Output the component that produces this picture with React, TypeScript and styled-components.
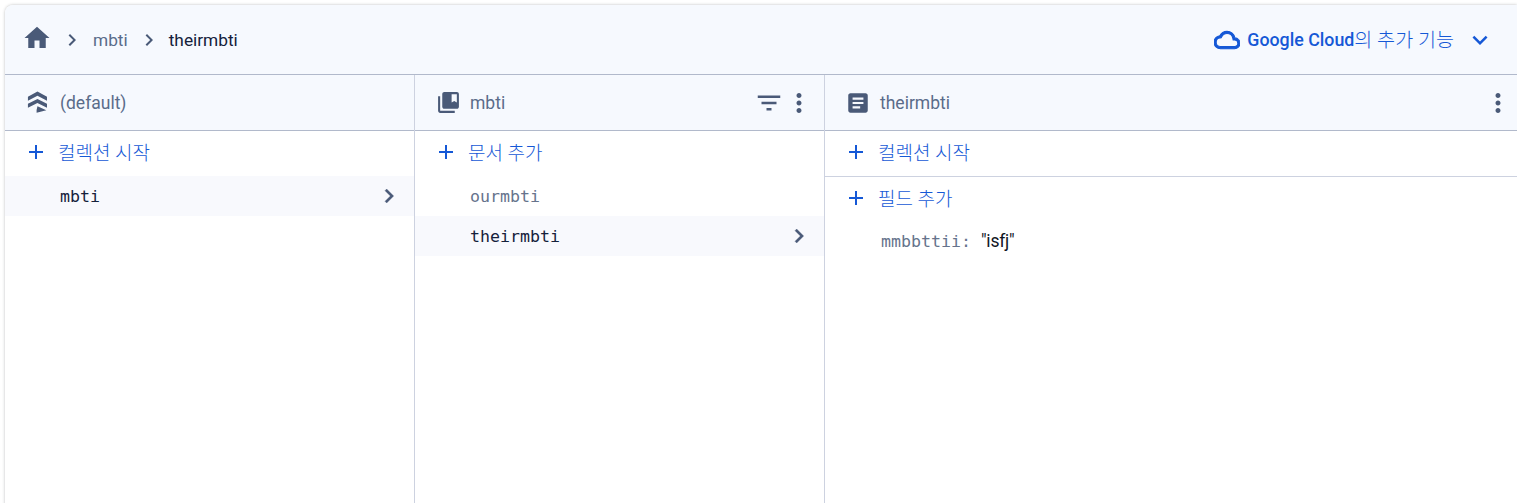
import React from 'react';
import styled, { createGlobalStyle } from 'styled-components';

const Global = createGlobalStyle`
  html, body { margin: 0; padding: 0; background: #fff; overflow: hidden; }
  body { font-family: Roboto, "Noto Sans CJK KR", sans-serif; }
`;

const Page = styled.div`
  height: 503px;
  padding: 5px 0 0 5px;
  box-sizing: border-box;
  overflow: hidden;
`;

const Card = styled.div`
  height: 520px;
  border-radius: 8px 0 0 0;
  box-shadow: 0 0 3px rgba(60, 64, 67, 0.35);
  display: flex;
  flex-direction: column;
  background: #fff;
  overflow: hidden;
`;

const TopBar = styled.header`
  height: 69px;
  flex: none;
  display: flex;
  align-items: center;
  justify-content: space-between;
  background: #f6f9fe;
  border-bottom: 1px solid #b1b9cb;
  padding: 0 22px 0 17px;
`;

const Crumbs = styled.nav`
  display: flex;
  align-items: center;
  font-size: 17.3px;
  color: #5a6c8a;
`;

const Svg = styled.svg<{ $size: number; $color?: string; $weight?: number }>`
  width: ${p => p.$size}px;
  height: ${p => p.$size}px;
  flex: none;
  display: block;
  fill: ${p => p.$color ?? '#4a5a78'};
  stroke: ${p => (p.$weight ? p.$color ?? '#4a5a78' : 'none')};
  stroke-width: ${p => p.$weight ?? 0};
`;

const HomeLink = styled.span`
  display: flex;
  margin: -4px 8px 0 0;
`;

const CrumbText = styled.span<{ $current?: boolean; $gap: number }>`
  margin: 0 ${p => p.$gap}px;
  color: ${p => (p.$current ? '#15213b' : '#5a6c8a')};
`;

const Extensions = styled.div`
  display: flex;
  align-items: center;
  color: #1558d6;
  font-size: 17.8px;
`;

const CloudIcon = styled.span`
  display: flex;
  margin-right: 7px;
`;

const ExtLabel = styled.span`
  font-weight: 500;
`;

const ExtSuffix = styled.span`
  font-weight: 300;
  font-size: 19.6px;
  margin-top: -2px;
`;

const ExpandIcon = styled.span`
  display: flex;
  margin-left: 11px;
`;

const Columns = styled.div`
  flex: 1;
  display: grid;
  grid-template-columns: 410px 410px 1fr;
`;

const Column = styled.section<{ $last?: boolean }>`
  border-right: ${p => (p.$last ? 'none' : '1px solid #cdd2e0')};
  display: flex;
  flex-direction: column;
`;

const ColHeader = styled.div<{ $endPad?: number }>`
  height: 55px;
  flex: none;
  display: flex;
  align-items: center;
  background: #f6f9fe;
  border-bottom: 1px solid #b1b9cb;
  padding: 0 ${p => p.$endPad ?? 0}px 0 20px;
  font-size: 17.5px;
  color: #5a6c8a;
`;

const ColIcon = styled.span`
  width: 26px;
  margin-right: 9px;
  display: flex;
  justify-content: center;
  flex: none;
`;

const ColTitle = styled.span`
  flex: 1;
`;

const HeaderActions = styled.div`
  display: flex;
  align-items: center;
`;

const AddRow = styled.div<{ $divider?: boolean; $h: number; $lift: number }>`
  height: ${p => p.$h}px;
  display: flex;
  align-items: center;
  padding: 0 0 ${p => p.$lift}px 19px;
  color: #1558d6;
  font-size: 19px;
  font-weight: 300;
  flex: none;
  box-sizing: border-box;
  border-bottom: ${p => (p.$divider ? '1px solid #cdd2e0' : 'none')};
`;

const AddLabel = styled.span`
  margin-top: -2px;
`;

const PlusWrap = styled.span`
  display: flex;
  margin-right: 10px;
`;

const ItemRow = styled.div<{ $selected?: boolean }>`
  height: 40px;
  flex: none;
  display: flex;
  align-items: center;
  justify-content: space-between;
  padding: 0 11px 0 55px;
  font-family: "DejaVu Sans Mono", monospace;
  font-size: 16.6px;
  background: ${p => (p.$selected ? '#f8f9fd' : 'transparent')};
  color: ${p => (p.$selected ? '#15213b' : '#66738c')};
`;

const FieldRow = styled.div`
  display: flex;
  align-items: center;
  height: 40px;
  padding-left: 56px;
  flex: none;
`;

const FieldKey = styled.span`
  font-family: "DejaVu Sans Mono", monospace;
  font-size: 16.6px;
  color: #66738c;
  margin-right: 10px;
`;

const FieldValue = styled.span`
  font-size: 17.5px;
  color: #10151f;
  letter-spacing: -0.2px;
`;

const Icon = ({ d, size = 24, color, weight }: { d: string; size?: number; color?: string; weight?: number }) => (
  <Svg $size={size} $color={color} $weight={weight} viewBox="0 0 24 24"><path d={d} /></Svg>
);

const P = {
  home: 'M10 20v-6h4v6h5v-8h3L12 3 2 12h3v8z',
  right: 'M10 6L8.59 7.41 13.17 12l-4.58 4.59L10 18l6-6z',
  down: 'M16.59 8.59L12 13.17 7.41 8.59 6 10l6 6 6-6z',
  cloud: 'M19.35 10.04C18.67 6.59 15.64 4 12 4 9.11 4 6.6 5.64 5.35 8.04 2.34 8.36 0 10.91 0 14c0 3.31 2.69 6 6 6h13c2.76 0 5-2.24 5-5 0-2.64-2.05-4.78-4.65-4.96zM19 18H6c-2.21 0-4-1.79-4-4 0-2.05 1.53-3.76 3.56-3.97l1.07-.11.5-.95C8.08 7.14 9.94 6 12 6c2.62 0 4.88 1.86 5.39 4.43l.3 1.5 1.53.11c1.56.1 2.78 1.41 2.78 2.96 0 1.65-1.35 3-3 3z',
  plus: 'M19 13h-6v6h-2v-6H5v-2h6V5h2v6h6v2z',
  more: 'M12 8c1.1 0 2-.9 2-2s-.9-2-2-2-2 .9-2 2 .9 2 2 2zm0 2c-1.1 0-2 .9-2 2s.9 2 2 2 2-.9 2-2-.9-2-2-2zm0 6c-1.1 0-2 .9-2 2s.9 2 2 2 2-.9 2-2-.9-2-2-2z',
  filter: 'M10 18h4v-2h-4v2zM3 6v2h18V6H3zm3 7h12v-2H6v2z',
  collection: 'M4 6H2v14c0 1.1.9 2 2 2h14v-2H4V6zM20 2H8c-1.1 0-2 .9-2 2v12c0 1.1.9 2 2 2h12c1.1 0 2-.9 2-2V4c0-1.1-.9-2-2-2zm0 10l-2.5-1.5L15 12V4h5v8z',
  doc: 'M19 3H5c-1.1 0-2 .9-2 2v14c0 1.1.9 2 2 2h14c1.1 0 2-.9 2-2V5c0-1.1-.9-2-2-2zm-5 14H7v-2h7v2zm3-4H7v-2h10v2zm0-4H7V7h10v2z',
  stack: 'M11.5 1.400L20.300 6.300V10L11.500 5.200 2.700 10V6.300zM11.500 8.300L20.300 12.800V16.300L11.500 12 2.700 16.300V12.800zM11.500 15L19.700 18.600 10.700 21V18.500z',
};

const Plus = () => <PlusWrap><Icon d={P.plus} color="#1558d6" /></PlusWrap>;
const RowArrow = () => <Icon d={P.right} size={28} color="#4a5a78" weight={0.3} />;

export default function App() {
  return (
    <Page>
      <Global />
      <Card>
        <TopBar>
          <Crumbs>
            <HomeLink><Icon d={P.home} size={30} /></HomeLink>
            <Icon d={P.right} />
            <CrumbText $gap={9}>mbti</CrumbText>
            <Icon d={P.right} />
            <CrumbText $gap={8} $current>theirmbti</CrumbText>
          </Crumbs>
          <Extensions>
            <CloudIcon><Icon d={P.cloud} size={26} color="#1558d6" weight={1} /></CloudIcon>
            <ExtLabel>Google Cloud</ExtLabel>
            <ExtSuffix>의 추가 기능</ExtSuffix>
            <ExpandIcon><Icon d={P.down} size={30} color="#1558d6" /></ExpandIcon>
          </Extensions>
        </TopBar>
        <Columns>
          <Column>
            <ColHeader>
              <ColIcon><Icon d={P.stack} size={26} /></ColIcon>
              <ColTitle>(default)</ColTitle>
            </ColHeader>
            <AddRow $h={45} $lift={3}><Plus /><AddLabel>컬렉션 시작</AddLabel></AddRow>
            <ItemRow $selected>mbti<RowArrow /></ItemRow>
          </Column>
          <Column>
            <ColHeader $endPad={10}>
              <ColIcon><Icon d={P.collection} size={25} /></ColIcon>
              <ColTitle>mbti</ColTitle>
              <HeaderActions>
                <Icon d={P.filter} size={30} />
                <Icon d={P.more} size={30} />
              </HeaderActions>
            </ColHeader>
            <AddRow $h={45} $lift={3}><Plus /><AddLabel>문서 추가</AddLabel></AddRow>
            <ItemRow>ourmbti</ItemRow>
            <ItemRow $selected>theirmbti<RowArrow /></ItemRow>
          </Column>
          <Column $last>
            <ColHeader $endPad={4}>
              <ColIcon><Icon d={P.doc} size={26} /></ColIcon>
              <ColTitle>theirmbti</ColTitle>
              <HeaderActions><Icon d={P.more} size={30} /></HeaderActions>
            </ColHeader>
            <AddRow $h={46} $lift={3} $divider><Plus /><AddLabel>컬렉션 시작</AddLabel></AddRow>
            <AddRow $h={44} $lift={2}><Plus /><AddLabel>필드 추가</AddLabel></AddRow>
            <FieldRow>
              <FieldKey>mmbbttii:</FieldKey>
              <FieldValue>"isfj"</FieldValue>
            </FieldRow>
          </Column>
        </Columns>
      </Card>
    </Page>
  );
}
